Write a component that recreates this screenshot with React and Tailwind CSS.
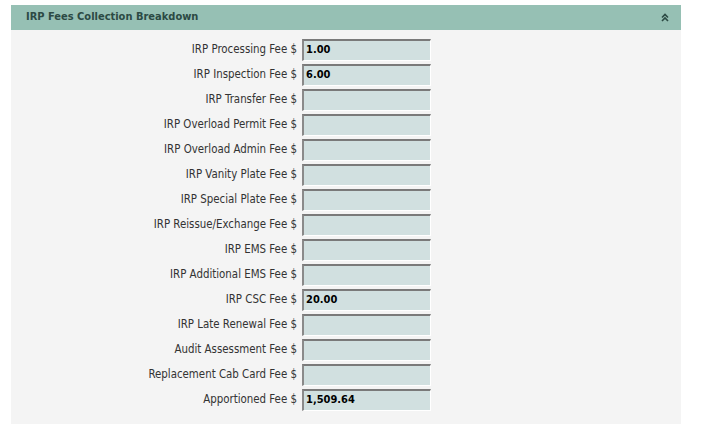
import React from "react";

const fees = [
  { label: "IRP Processing Fee $", value: "1.00" },
  { label: "IRP Inspection Fee $", value: "6.00" },
  { label: "IRP Transfer Fee $", value: "" },
  { label: "IRP Overload Permit Fee $", value: "" },
  { label: "IRP Overload Admin Fee $", value: "" },
  { label: "IRP Vanity Plate Fee $", value: "" },
  { label: "IRP Special Plate Fee $", value: "" },
  { label: "IRP Reissue/Exchange Fee $", value: "" },
  { label: "IRP EMS Fee $", value: "" },
  { label: "IRP Additional EMS Fee $", value: "" },
  { label: "IRP CSC Fee $", value: "20.00" },
  { label: "IRP Late Renewal Fee $", value: "" },
  { label: "Audit Assessment Fee $", value: "" },
  { label: "Replacement Cab Card Fee $", value: "" },
  { label: "Apportioned Fee $", value: "1,509.64" },
];

const App = () => {
  return (
    <div className="bg-white w-[701px] h-[432px] pt-[5px] pl-[11px] font-['DejaVu_Sans_Condensed','DejaVu_Sans',sans-serif]">
      <div className="w-[670px]">
        {/* Header */}
        <div className="h-[25px] bg-[#96c0b4] flex items-center justify-between pl-[15px] pr-[12px]">
          <span className="text-[11px] font-bold text-[#2c4a44]">
            IRP Fees Collection Breakdown
          </span>
          <svg width="8" height="9" viewBox="0 0 8 9" fill="none" stroke="#2c4a44" strokeWidth="1.6">
            <path d="M1 4.5 L4 1.5 L7 4.5" />
            <path d="M1 8 L4 5 L7 8" />
          </svg>
        </div>

        {/* Body */}
        <div className="bg-[#f4f4f4] h-[394px] pt-[9px]">
          {fees.map((fee, index) => (
            <div key={index} className="flex items-start h-[25px]">
              <label className="w-[291px] h-[22px] pr-[5px] flex items-center justify-end text-[11.4px] text-[#333333] whitespace-nowrap">
                {fee.label}
              </label>
              <div className="w-[129px] h-[22px] bg-[#d1e0e0] border-t-2 border-l-2 border-r border-b border-t-[#7a7a7a] border-l-[#8a8a8a] border-r-white border-b-white flex items-center pl-[2px] text-[11px] font-bold text-black">
                {fee.value}
              </div>
            </div>
          ))}
        </div>
      </div>
    </div>
  );
};

export default App;
